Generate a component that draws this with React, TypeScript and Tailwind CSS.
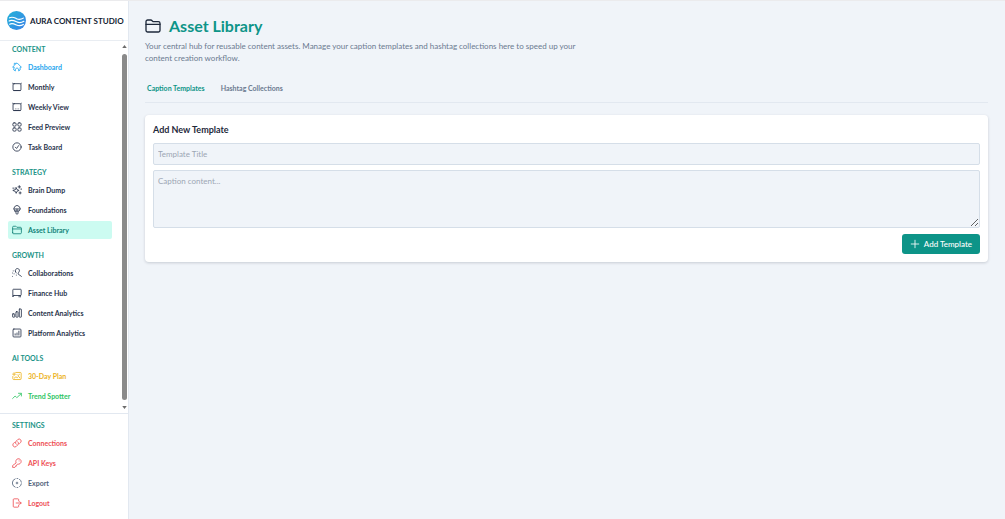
import { useState } from 'react';
import type { ReactNode } from 'react';
import clsx from 'clsx';

interface NavItem {
  label: string;
  icon: ReactNode;
  color?: string;
}

interface NavGroup {
  title: string;
  items: NavItem[];
}

const Icon = ({ className, children }: { className?: string; children: ReactNode }) => (
  <svg
    viewBox="0 0 24 24"
    fill="none"
    stroke="currentColor"
    strokeWidth="2"
    strokeLinecap="round"
    strokeLinejoin="round"
    aria-hidden="true"
    className={clsx('shrink-0', className)}
  >
    {children}
  </svg>
);

const folder = (
  <>
    <path d="M1.5 18.5V5.5A2.5 2.5 0 0 1 4 3h4.5c1 0 1.6.4 2.2 1.1L12 5.500h8A2.500 2.500 0 0 1 22.500 8v10.500A2.500 2.500 0 0 1 20 21H4a2.500 2.500 0 0 1-2.500-2.500z" />
    <path d="M1.500 9.500h21" />
  </>
);

const calendarFrame = (
  <>
    <rect x="2.500" y="4" width="19" height="16.500" rx="2.500" />
    <path d="M3 4.500 1.500 2.500M21 4.500l1.500-2M4 20.500h16" />
  </>
);

const groups: NavGroup[] = [
  {
    title: 'CONTENT',
    items: [
      {
        label: 'Dashboard',
        color: 'text-[#1ea5ee]',
        icon: (
          <path d="M4.500 12.500H1.500L5.500 8V3h3v2.500L12 2l10.500 10.500h-3V19L16 21.500V17l-4-3-4 3v4.500L4.500 19z" />
        ),
      },
      { label: 'Monthly', icon: calendarFrame },
      {
        label: 'Weekly View',
        icon: (
          <>
            {calendarFrame}
            <path d="M8 16.500h.1M12 16.500h.1M16 16.500h.1" strokeWidth="1.500" />
          </>
        ),
      },
      {
        label: 'Feed Preview',
        icon: (
          <>
            <rect x="2" y="2" width="8" height="8" rx="3" />
            <rect x="14" y="2" width="8" height="8" rx="3" />
            <rect x="2" y="14" width="8" height="8" rx="3" />
            <rect x="14" y="14" width="8" height="8" rx="3" />
          </>
        ),
      },
      {
        label: 'Task Board',
        icon: (
          <>
            <circle cx="12" cy="12" r="10" />
            <path d="m8 12.500 3 3 5-7" />
          </>
        ),
      },
    ],
  },
  {
    title: 'STRATEGY',
    items: [
      {
        label: 'Brain Dump',
        icon: (
          <>
            <path d="m10 6.500 2 4.500 5 2-5 2-2 5-2-4.500L2 13l6-2z" />
            <path d="M17.500 1.500v6M14.500 4.500h6M19.500 16.500v5M17 19h5M2 7.500h3M22 9v2" />
          </>
        ),
      },
      {
        label: 'Foundations',
        icon: (
          <>
            <path d="M7 14.500a7.500 7.500 0 1 1 10 0H7z" />
            <path d="M5 9.500h14M9.500 15v4.500a2.500 2.500 0 0 0 5 0V15M12 10v4" />
          </>
        ),
      },
      { label: 'Asset Library', color: 'text-[#128378]', icon: folder },
    ],
  },
  {
    title: 'GROWTH',
    items: [
      {
        label: 'Collaborations',
        icon: (
          <>
            <path d="M8 7.500A5 5 0 1 1 17 9c-.7 1.600-2 2.500-2 4.500 0 2 1.500 3 3 3.500 2 .6 3.500 1.500 4.500 3.500" />
            <path d="M8 7.500c0 2 1 3 2.500 4.500M1 12v.1M3 7v.1M1 20v.1M5 14v.1M10.500 17v.1" />
          </>
        ),
      },
      {
        label: 'Finance Hub',
        icon: (
          <path d="M4.500 18 2 21.500V4.500A1.500 1.500 0 0 1 3.500 3h17A1.500 1.500 0 0 1 22 4.500v12a1.500 1.500 0 0 1-1.500 1.500h-16zM17 18v3.500M20 18v3.500" />
        ),
      },
      {
        label: 'Content Analytics',
        icon: (
          <>
            <rect x="1.500" y="14" width="5" height="8" rx="1" />
            <rect x="9.500" y="9" width="5" height="13" rx="1" />
            <rect x="17.500" y="2.500" width="5" height="19.500" rx="1" />
          </>
        ),
      },
      {
        label: 'Platform Analytics',
        icon: (
          <>
            <rect x="2.500" y="2.500" width="19" height="19" rx="2" />
            <path d="M7.500 17v-3M12 17v-5M16.500 17V7.500" />
          </>
        ),
      },
    ],
  },
  {
    title: 'AI TOOLS',
    items: [
      {
        label: '30-Day Plan',
        color: 'text-[#ecb31f]',
        icon: (
          <>
            <path d="M9 3.500h11a2 2 0 0 1 2 2v13a2 2 0 0 1-2 2H4a2 2 0 0 1-2-2V13" />
            <path d="M1.500 7.500h7M5 4v7M12 8.500l2.500 2.500L18 8M5.500 17l4-3 3 2 3.500-3 3 4" />
          </>
        ),
      },
      {
        label: 'Trend Spotter',
        color: 'text-[#2fc564]',
        icon: <path d="m1.500 18 6-6 4 4 10.500-9.500M15.500 5.500h7V12" />,
      },
    ],
  },
];

const settings: NavGroup = {
  title: 'SETTINGS',
  items: [
    {
      label: 'Connections',
      color: 'text-[#ee4f55]',
      icon: (
        <path d="M13 8.500a5 5 0 0 1 1.500 7.500L10 20.500a5 5 0 0 1-7-7L6 10.500M11 15.500A5 5 0 0 1 9.500 8L14 3.500a5 5 0 0 1 7 7l-3 3" />
      ),
    },
    {
      label: 'API Keys',
      color: 'text-[#ee4f55]',
      icon: (
        <>
          <path d="M9.500 11A6.500 6.500 0 1 1 13.500 14.500L11 17v2H8.500v2L7 22.500H1.500V19z" />
          <path d="M17 7h.1" />
        </>
      ),
    },
    {
      label: 'Export',
      color: 'text-[#52637a]',
      icon: (
        <>
          <path d="M7.500 22A10.800 10.800 0 0 1 7.500 2M12 1h2M18 3a10.800 10.800 0 0 1 4.500 7M22.500 14a10.800 10.800 0 0 1-4 6.500M12 23h2" />
          <path d="M12 10v4M10 12h4" />
        </>
      ),
    },
    {
      label: 'Logout',
      color: 'text-[#ee4f55]',
      icon: (
        <path d="M16 7V4a2 2 0 0 0-2-2H5a2 2 0 0 0-2 2v16a2 2 0 0 0 2 2h9a2 2 0 0 0 2-2v-3M10 12h12M18.500 8.500 22 12l-3.500 3.500" />
      ),
    },
  ],
};

const NavSection = ({ group, active }: { group: NavGroup; active?: string }) => (
  <section>
    <h2 className="px-1 text-[7px] leading-[14px] font-bold text-[#1b9488]">{group.title}</h2>
    <ul className="mt-0.5 flex flex-col gap-0.5">
      {group.items.map((item) => (
        <li key={item.label}>
          <a
            href="#"
            aria-current={item.label === active ? 'page' : undefined}
            className={clsx(
              'flex h-[18px] items-center gap-1.5 rounded-xs px-1 text-[7px] font-bold',
              item.color ?? 'text-[#27324a]',
              item.label === active && 'bg-[#ccfbf1]'
            )}
          >
            <Icon className="size-2.5">{item.icon}</Icon>
            {item.label}
          </a>
        </li>
      ))}
    </ul>
  </section>
);

const Logo = () => (
  <svg viewBox="0 0 36 36" className="size-[19px] shrink-0" aria-hidden="true">
    <defs>
      <linearGradient id="logo" x1="0" y1="0" x2="1" y2="1">
        <stop offset="0" stopColor="#22b3d8" />
        <stop offset="1" stopColor="#3b82e8" />
      </linearGradient>
    </defs>
    <circle cx="18" cy="18" r="18" fill="url(#logo)" />
    <g fill="none" stroke="#fff" strokeWidth="2.200" strokeLinecap="round">
      <path d="M5 13c5-3 8-1 13 1.500s8 2 13-1" />
      <path d="M4 19c5-3 9-1 14 1.500s9 2 14-1" />
      <path d="M5 25c5-3 8-1 13 1.500s8 2 13-1" />
    </g>
  </svg>
);

const Sidebar = () => (
  <aside className="flex w-32 shrink-0 flex-col bg-white">
    <div className="flex h-10 items-center gap-1 border-b border-[#e9edf2] px-[7px] text-[8px] font-bold whitespace-nowrap text-[#141d33]">
      <Logo />
      AURA CONTENT STUDIO
    </div>
    <div className="flex grow">
      <nav className="flex grow flex-col gap-[9px] px-2 pt-px">
        {groups.map((group) => (
          <NavSection key={group.title} group={group} active="Asset Library" />
        ))}
      </nav>
      <div className="flex w-2 flex-col items-center gap-1.5 py-1" aria-hidden="true">
        <svg viewBox="0 0 6 4" className="h-[3px] w-[5px] fill-[#6b6b6b]">
          <path d="M3 0 6 4H0z" />
        </svg>
        <div className="w-[5px] grow rounded-full bg-[#8a8a8a]" />
        <svg viewBox="0 0 6 4" className="h-[3px] w-[5px] fill-[#6b6b6b]">
          <path d="M3 4 6 0H0z" />
        </svg>
      </div>
    </div>
    <div className="border-t border-[#e2e8f0] px-2 pt-1 pb-[7px]">
      <NavSection group={settings} />
    </div>
  </aside>
);

const TemplateForm = () => (
  <form
    onSubmit={(e) => e.preventDefault()}
    className="mt-3 flex flex-col rounded bg-white p-2 shadow-[0_1px_3px_rgba(15,23,42,0.18)]"
  >
    <h2 className="text-[9px] leading-[14px] font-bold text-[#1e293b]">Add New Template</h2>
    <input
      type="text"
      aria-label="Template Title"
      placeholder="Template Title"
      className="mt-1.5 h-[22px] rounded-xs border border-[#d5dee8] bg-[#f0f4f9] px-1 text-[8px] placeholder:text-[#9ca6b4]"
    />
    <textarea
      aria-label="Caption content"
      placeholder="Caption content..."
      className="mt-[5px] h-[58px] resize-y rounded-xs border border-[#d5dee8] bg-[#f0f4f9] px-1 py-1 text-[8px] leading-3 placeholder:text-[#9ca6b4]"
    />
    <button
      type="submit"
      className="mt-1.5 flex h-5 items-center gap-1 self-end rounded-[3px] bg-[#0d9488] px-2 text-[8px] font-medium text-white"
    >
      <Icon className="size-2.5">
        <path d="M12 3v18M3 12h18" />
      </Icon>
      Add Template
    </button>
  </form>
);

const tabs = ['Caption Templates', 'Hashtag Collections'];

const App = () => {
  const [tab, setTab] = useState(tabs[0]);

  return (
    <div className="flex min-h-screen border-t border-[#ebebed] bg-[#f0f4f9] font-['Lato',sans-serif]">
      <Sidebar />
      <main className="min-w-0 grow border-l border-[#e2e8f0] pt-[15px] pr-[17px] pl-4">
        <header>
          <div className="flex items-center gap-2 text-[#1e293b]">
            <Icon className="size-4">{folder}</Icon>
            <h1 className="text-[16px] leading-5 font-bold text-[#0d9488]">Asset Library</h1>
          </div>
          <p className="mt-1 max-w-[448px] text-[8px] leading-3 text-[#6b7a90]">
            Your central hub for reusable content assets. Manage your caption templates and hashtag collections here to
            speed up your content creation workflow.
          </p>
        </header>

        <div role="tablist" className="mt-3 flex gap-3 border-b border-[#e2e8f0] pb-0.5">
          {tabs.map((name) => (
            <button
              key={name}
              type="button"
              role="tab"
              aria-selected={name === tab}
              onClick={() => setTab(name)}
              className={clsx(
                'h-6 px-0.5 text-[7px] font-bold',
                name === tab ? 'text-[#0d9488]' : 'text-[#6b7a90]'
              )}
            >
              {name}
            </button>
          ))}
        </div>

        <TemplateForm />
      </main>
    </div>
  );
};

export default App;
